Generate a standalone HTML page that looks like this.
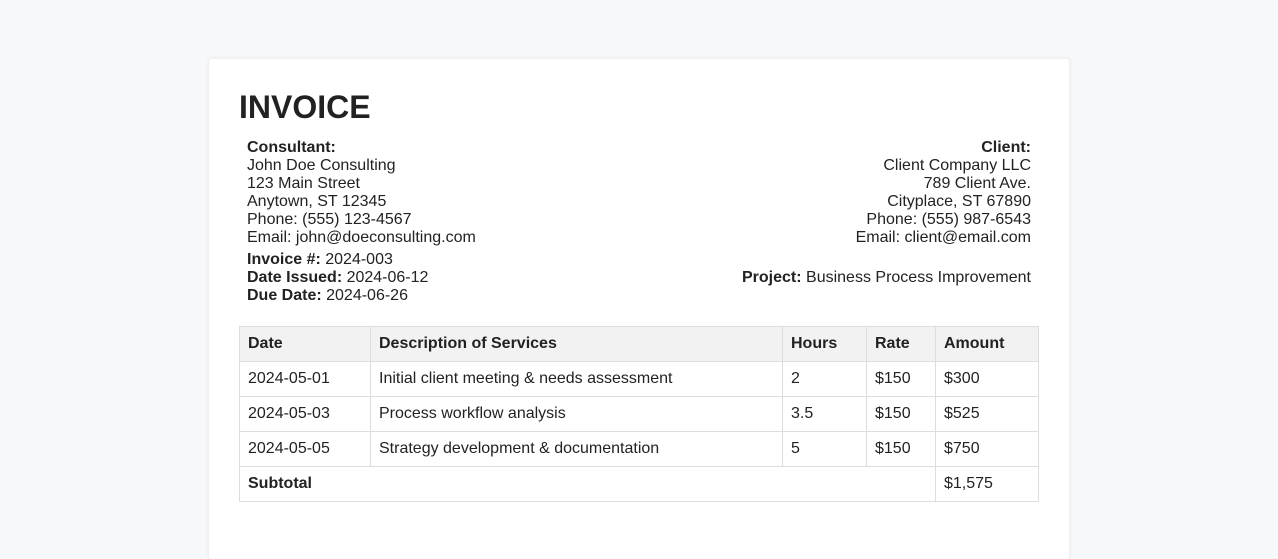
<!DOCTYPE html>
<html><head><style>
html,body{overflow:hidden;}
body{margin:0;background:#f7f8fa;font-family:"Liberation Sans",Arial,sans-serif;color:#222;font-size:16px;}
.card{position:absolute;left:209px;top:59px;width:800px;height:500px;padding:0 30px;background:#fff;box-shadow:0 0 6px rgba(0,0,0,0.08);border-radius:3px;}
h1{margin:0;position:absolute;left:30px;top:30px;font-size:32px;line-height:36px;font-weight:bold;}
.row{position:absolute;left:38px;width:784px;display:flex;justify-content:space-between;line-height:18px;}
.r{text-align:right;}
table{position:absolute;left:30px;top:267px;width:800px;border-collapse:collapse;}
td,th{border:1px solid #ddd;height:34px;padding:0 8px;text-align:left;font-size:16px;}
th{background:#f2f2f2;font-weight:bold;}
</style></head><body>
<div class="card">
<h1>INVOICE</h1>
<div class="row" style="top:80px">
<div><b>Consultant:</b><br>John Doe Consulting<br>123 Main Street<br>Anytown, ST 12345<br>Phone: (555) 123-4567<br>Email: john@doeconsulting.com</div>
<div class="r"><b>Client:</b><br>Client Company LLC<br>789 Client Ave.<br>Cityplace, ST 67890<br>Phone: (555) 987-6543<br>Email: client@email.com</div>
</div>
<div class="row" style="top:192px;align-items:center">
<div><b>Invoice #:</b> 2024-003<br><b>Date Issued:</b> 2024-06-12<br><b>Due Date:</b> 2024-06-26</div>
<div class="r"><b>Project:</b> Business Process Improvement</div>
</div>
<table>
<tr><th style="width:114px">Date</th><th style="width:395px">Description of Services</th><th style="width:67px">Hours</th><th style="width:52px">Rate</th><th>Amount</th></tr>
<tr><td>2024-05-01</td><td>Initial client meeting &amp; needs assessment</td><td>2</td><td>$150</td><td>$300</td></tr>
<tr><td>2024-05-03</td><td>Process workflow analysis</td><td>3.5</td><td>$150</td><td>$525</td></tr>
<tr><td>2024-05-05</td><td>Strategy development &amp; documentation</td><td>5</td><td>$150</td><td>$750</td></tr>
<tr><td colspan="4"><b>Subtotal</b></td><td>$1,575</td></tr>
</table>
</div>
</body></html>
